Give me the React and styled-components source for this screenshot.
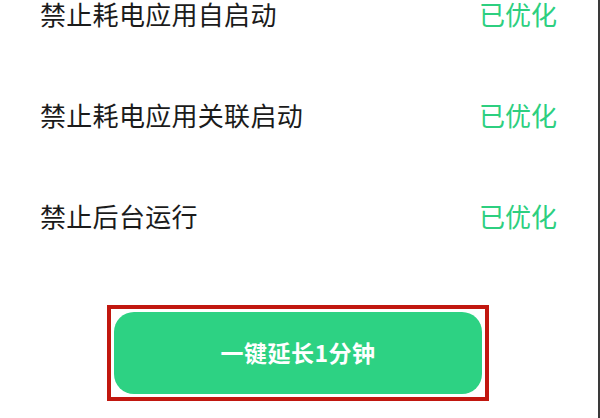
import styled, { createGlobalStyle } from 'styled-components';

const GlobalStyle = createGlobalStyle`
  html, body {
    margin: 0;
    padding: 0;
    background: #ffffff;
  }
  * {
    box-sizing: border-box;
  }
`;

const colors = {
  text: '#1b1b1b',
  green: '#2dcf80',
  button: '#2dd283',
  frame: '#c1170f',
  edge: '#3a3a3a',
};

const Page = styled.div`
  width: 600px;
  height: 418px;
  overflow: hidden;
  background: #ffffff;
  border-right: 2px solid ${colors.edge};
  font-family: 'Noto Sans CJK SC', 'Noto Sans', sans-serif;
`;

const List = styled.div`
  display: flex;
  flex-direction: column;
  margin-top: -37px;
`;

const Row = styled.div`
  display: flex;
  justify-content: space-between;
  align-items: center;
  height: 101px;
  padding: 0 41px 0 40px;
`;

const Label = styled.span`
  font-size: 26px;
  color: ${colors.text};
  letter-spacing: 0.3px;
`;

const Status = styled.span`
  font-size: 26px;
  color: ${colors.green};
`;

const ButtonArea = styled.div`
  display: flex;
  justify-content: center;
  padding: 39px 0 0 0;
`;

const Frame = styled.div`
  width: 382px;
  border: 4px solid ${colors.frame};
  padding: 3px;
  background: #ffffff;
  margin-left: -2px;
`;

const ExtendButton = styled.button`
  display: flex;
  align-items: center;
  justify-content: center;
  width: 100%;
  height: 82px;
  border: none;
  border-radius: 20px;
  background: ${colors.button};
  color: #ffffff;
  font-family: 'Noto Sans CJK SC', 'Noto Sans', sans-serif;
  font-size: 23px;
  font-weight: 600;
  letter-spacing: 0.5px;
  padding: 0 0 2px 0;
`;

const items = ['禁止耗电应用自启动', '禁止耗电应用关联启动', '禁止后台运行'];

export default function App() {
  return (
    <>
      <GlobalStyle />
      <Page>
        <List>
          {items.map((item) => (
            <Row key={item}>
              <Label>{item}</Label>
              <Status>已优化</Status>
            </Row>
          ))}
        </List>
        <ButtonArea>
          <Frame>
            <ExtendButton>一键延长1分钟</ExtendButton>
          </Frame>
        </ButtonArea>
      </Page>
    </>
  );
}
